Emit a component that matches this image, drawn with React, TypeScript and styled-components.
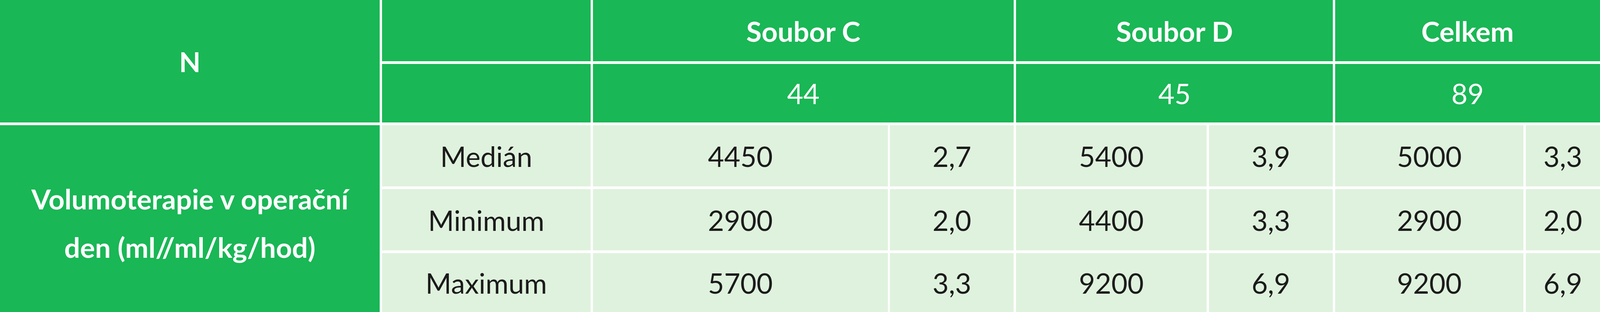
import { Fragment } from 'react';
import { createGlobalStyle, styled } from 'styled-components';

const GlobalStyle = createGlobalStyle`
    html, body {
        margin: 0;
        padding: 0;
        background: #ffffff;
    }
`;

const green = '#19b755';
const paleGreen = '#dff2dd';

// column widths taken from the 5039px wide original, kept as proportions
const Table = styled.div`
    display: grid;
    grid-template-columns: 1196fr 657fr 929fr 390fr 600fr 391fr 593fr 234fr;
    grid-template-rows: 157px 150px 157px 157px 151px;
    column-gap: 0.139vw;
    row-gap: 7px;
    width: 100vw;
    height: 800px;
    background: #ffffff;
    font-family: Lato, "Open Sans", sans-serif;
    font-size: 1.746vw;
    overflow: hidden;
`;

const Cell = styled.div<{ $head?: boolean; $bold?: boolean; $col?: string; $row?: string; }>`
    display: flex;
    align-items: center;
    justify-content: center;
    min-width: 0;
    text-align: center;
    white-space: nowrap;
    background: ${props => props.$head ? green : paleGreen};
    color: ${props => props.$head ? '#ffffff' : '#1b1b1b'};
    font-weight: ${props => props.$bold ? 700 : 400};
    grid-column: ${props => props.$col || 'auto'};
    grid-row: ${props => props.$row || 'auto'};
`;

const Label = styled.span`
    line-height: 124px;
    padding-top: 20px;
`;

const groups = [
    { name: 'Soubor C', n: '44', col: '3 / 5' },
    { name: 'Soubor D', n: '45', col: '5 / 7' },
    { name: 'Celkem', n: '89', col: '7 / 9' },
];

const rows = [
    { stat: 'Medián', values: ['4450', '2,7', '5400', '3,9', '5000', '3,3'] },
    { stat: 'Minimum', values: ['2900', '2,0', '4400', '3,3', '2900', '2,0'] },
    { stat: 'Maximum', values: ['5700', '3,3', '9200', '6,9', '9200', '6,9'] },
];

export default function App() {
    return (
        <>
            <GlobalStyle />
            <Table>
                <Cell $head $bold $col="1" $row="1 / 3">N</Cell>
                <Cell $head $col="2" $row="1" />
                {groups.map(g => (
                    <Cell key={g.name} $head $bold $col={g.col} $row="1">{g.name}</Cell>
                ))}
                <Cell $head $col="2" $row="2" />
                {groups.map(g => (
                    <Cell key={g.n} $head $col={g.col} $row="2">{g.n}</Cell>
                ))}
                <Cell $head $bold $col="1" $row="3 / 6">
                    <Label>Volumoterapie v operační<br />den (ml//ml/kg/hod)</Label>
                </Cell>
                {rows.map((r, i) => (
                    <Fragment key={r.stat}>
                        <Cell $col="2" $row={String(i + 3)}>{r.stat}</Cell>
                        {r.values.map((v, j) => (
                            <Cell key={j} $col={String(j + 3)} $row={String(i + 3)}>{v}</Cell>
                        ))}
                    </Fragment>
                ))}
            </Table>
        </>
    );
}
